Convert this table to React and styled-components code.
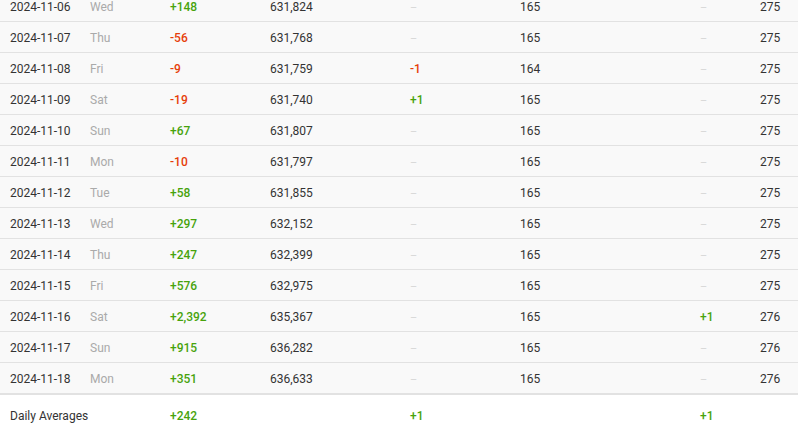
import React from 'react'
import styled, { createGlobalStyle } from 'styled-components'

const rows = [
  ['2024-11-06', 'Wed', 148, '631,824', 0, 165, 0, 275],
  ['2024-11-07', 'Thu', -56, '631,768', 0, 165, 0, 275],
  ['2024-11-08', 'Fri', -9, '631,759', -1, 164, 0, 275],
  ['2024-11-09', 'Sat', -19, '631,740', 1, 165, 0, 275],
  ['2024-11-10', 'Sun', 67, '631,807', 0, 165, 0, 275],
  ['2024-11-11', 'Mon', -10, '631,797', 0, 165, 0, 275],
  ['2024-11-12', 'Tue', 58, '631,855', 0, 165, 0, 275],
  ['2024-11-13', 'Wed', 297, '632,152', 0, 165, 0, 275],
  ['2024-11-14', 'Thu', 247, '632,399', 0, 165, 0, 275],
  ['2024-11-15', 'Fri', 576, '632,975', 0, 165, 0, 275],
  ['2024-11-16', 'Sat', 2392, '635,367', 0, 165, 1, 276],
  ['2024-11-17', 'Sun', 915, '636,282', 0, 165, 0, 276],
  ['2024-11-18', 'Mon', 351, '636,633', 0, 165, 0, 276],
]

const GlobalStyle = createGlobalStyle`
  html, body {
    margin: 0;
    padding: 0;
    background: #fff;
    overflow: hidden;
  }
  body {
    font-family: Roboto, "Liberation Sans", Arial, sans-serif;
    font-size: 12px;
    color: #333;
  }
`

const Table = styled.div`
  width: 798px;
  margin-top: -9px;
`

const Row = styled.div`
  display: grid;
  grid-template-columns: 80px 80px 100px 140px 110px 180px 60px 1fr;
  align-items: center;
  height: 30px;
  padding-top: 2px;
  box-sizing: border-box;
  height: 31px;
  background: ${(p) => (p.$footer ? '#fff' : '#f9f9f9')};
  border-bottom: 1px solid #e2e2e2;
  ${(p) => p.$footer && `
    height: 42px;
    padding-top: 1px;
    border-top: 1px solid #e2e2e2;
    border-bottom: none;
  `}
`

const Cell = styled.div`
  padding-left: 10px;
  white-space: nowrap;
  color: #333;
`

const Day = styled(Cell)`
  color: #aaa;
`

const Delta = styled(Cell)`
  font-weight: 500;
  color: ${(p) => (p.$value > 0 ? '#47a30c' : '#e63e0a')};
`

const Dash = styled(Cell)`
  color: #d6d6d6;
  font-size: 11px;
`

const fmt = (n) => (n > 0 ? '+' : '-') + Math.abs(n).toLocaleString('en-US')

const Change = ({ value }) =>
  value === 0 ? <Dash>–</Dash> : <Delta $value={value}>{fmt(value)}</Delta>

const App = () => {
  return (
    <>
      <GlobalStyle />
      <Table>
        {rows.map((r) => (
          <Row key={r[0]}>
            <Cell>{r[0]}</Cell>
            <Day>{r[1]}</Day>
            <Change value={r[2]} />
            <Cell>{r[3]}</Cell>
            <Change value={r[4]} />
            <Cell>{r[5]}</Cell>
            <Change value={r[6]} />
            <Cell>{r[7]}</Cell>
          </Row>
        ))}
        <Row $footer>
          <Cell>Daily Averages</Cell>
          <Cell />
          <Change value={242} />
          <Cell />
          <Change value={1} />
          <Cell />
          <Change value={1} />
          <Cell />
        </Row>
      </Table>
    </>
  )
}

export default App
